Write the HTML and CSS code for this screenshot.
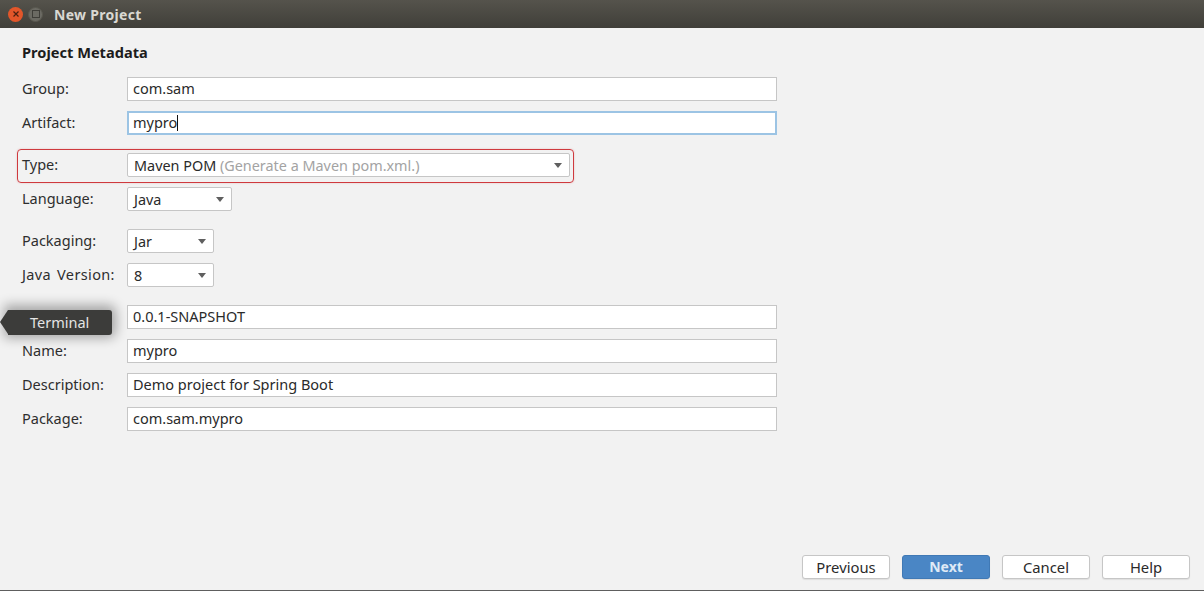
FILE: index.html
```html
<!DOCTYPE html>
<html lang="en">
<head>
<meta charset="utf-8">
<title>New Project</title>
<link rel="stylesheet" href="styles.css">
</head>
<body>
<div class="window">
  <header class="titlebar">
    <span class="btn-close"><svg width="10" height="10" viewBox="0 0 10 10"><path d="M2.5 2.5l5 5M7.5 2.5l-5 5" stroke="#4a2010" stroke-width="1.2" fill="none"/></svg></span>
    <span class="btn-max"><svg width="10" height="10" viewBox="0 0 10 10"><rect x="1.5" y="1.5" width="7" height="7" stroke="#3f3e39" fill="none"/></svg></span>
    <span class="title">New Project</span>
  </header>
  <main class="content">
    <h1 class="heading">Project Metadata</h1>
    <div class="form">
      <div class="row"><label>Group:</label><div class="input">com.sam</div></div>
      <div class="row gap-10"><label>Artifact:</label><div class="input focus">mypro<i class="caret"></i></div></div>
      <div class="row gap-18 type-row"><label>Type:</label><div class="select wide"><span>Maven POM <em>(Generate a Maven pom.xml.)</em></span><b class="arrow"></b></div></div>
      <div class="row gap-10"><label>Language:</label><div class="select lang"><span>Java</span><b class="arrow"></b></div></div>
      <div class="row gap-18"><label>Packaging:</label><div class="select small"><span>Jar</span><b class="arrow"></b></div></div>
      <div class="row gap-10"><label class="wide-words">Java Version:</label><div class="select small"><span>8</span><b class="arrow"></b></div></div>
      <div class="row gap-18"><label></label><div class="input">0.0.1-SNAPSHOT</div></div>
      <div class="row gap-10"><label>Name:</label><div class="input">mypro</div></div>
      <div class="row gap-10"><label>Description:</label><div class="input">Demo project for Spring Boot</div></div>
      <div class="row gap-10"><label>Package:</label><div class="input">com.sam.mypro</div></div>
    </div>
    <footer class="actions">
      <button class="button">Previous</button>
      <button class="button primary">Next</button>
      <button class="button">Cancel</button>
      <button class="button">Help</button>
    </footer>
  </main>
  <div class="tooltip">Terminal</div>
</div>
</body>
</html>
```
FILE: styles.css
```css
* { box-sizing: border-box; }
html, body { margin: 0; height: 100%; overflow: hidden; }
body { font-family: "Noto Sans", "Open Sans", sans-serif; font-size: 14px; color: #2a2a2a; background: #f2f2f2; }
.window { position: relative; height: 591px; display: flex; flex-direction: column; border-bottom: 1px solid #5e5e5e; }

.titlebar { height: 28px; flex: none; display: flex; align-items: center; padding-left: 8px; background: linear-gradient(#55534c, #403f39); }
.btn-close, .btn-max { width: 15px; height: 15px; border-radius: 50%; display: flex; align-items: center; justify-content: center; }
.btn-close { background: #e2562a; }
.btn-max { margin-left: 5px; background: #6b6a63; border: 1px solid #59584f; }
.title { margin-left: 11px; font-size: 14px; font-weight: 700; color: #d9d8d2; letter-spacing: 0.3px; }

.content { flex: 1; display: flex; flex-direction: column; padding: 16px 14px 11px 22px; min-height: 0; }
.heading { margin: 0; height: 16px; line-height: 16px; font-size: 14.6px; font-weight: 700; color: #1c1c1c; }
.form { margin-top: 17px; display: flex; flex-direction: column; }
.row { display: flex; align-items: center; height: 24px; }
.gap-10 { margin-top: 10px; }
.gap-18 { margin-top: 18px; }
.row label { width: 105px; flex: none; padding-bottom: 2px; font-size: 14.5px; color: #2e2e2e; }
.row .wide-words { word-spacing: 2px; letter-spacing: 0.35px; white-space: nowrap; }

.input { width: 650px; height: 24px; line-height: 20px; padding-left: 5px; background: #fff; border: 1px solid #c6c6c6; font-size: 14.5px; color: #2a2a2a; white-space: pre; }
.input.focus { border: 2px solid #9cc4e4; line-height: 19px; padding-left: 4px; position: relative; }
.caret { display: inline-block; width: 1px; height: 16px; background: #111; vertical-align: -3px; }

.select { height: 24px; display: flex; align-items: center; justify-content: space-between; padding: 0 7px 0 6px; background: #fff; border: 1px solid #c6c6c6; border-radius: 2px; font-size: 14.4px; color: #2a2a2a; }
.select em { font-style: normal; color: #a3a3a3; }
.wide { width: 443px; }
.lang { width: 105px; }
.small { width: 87px; }
.arrow { width: 0; height: 0; border-left: 4.5px solid transparent; border-right: 4.5px solid transparent; border-top: 5px solid #5f5f5f; }

.type-row { position: relative; }
.type-row::after { content: ""; position: absolute; left: -5px; top: -4px; width: 555px; height: 32px; border: 1px solid #cf3a3e; border-radius: 4px; box-shadow: 0 0 2px rgba(208, 52, 58, .25); pointer-events: none; }

.actions { margin-top: auto; display: flex; justify-content: flex-end; gap: 12px; }
.button { width: 88px; height: 24px; padding: 0 0 1px; background: #fff; border: 1px solid #c6c6c6; border-radius: 3px; font: 14.8px "Noto Sans", "Open Sans", sans-serif; color: #2a2a2a; box-shadow: 0 1px 1px rgba(0, 0, 0, .08); }
.button.primary { background: #4a86c5; border-color: #4079b5; color: #dfeaf6; font-weight: 700; font-size: 14px; }

.tooltip { position: absolute; left: 8px; top: 310px; width: 104px; height: 25px; line-height: 25px; padding-left: 22px; background: #3c3c3a; color: #e4e4e4; border-radius: 0 3px 3px 0; font-size: 14.5px; box-shadow: 0 -1px 12px 4px rgba(0, 0, 0, .32); }
.tooltip::before { content: ""; position: absolute; left: -8px; top: 0; border-top: 12.5px solid transparent; border-bottom: 12.5px solid transparent; border-right: 8px solid #3c3c3a; }
```
